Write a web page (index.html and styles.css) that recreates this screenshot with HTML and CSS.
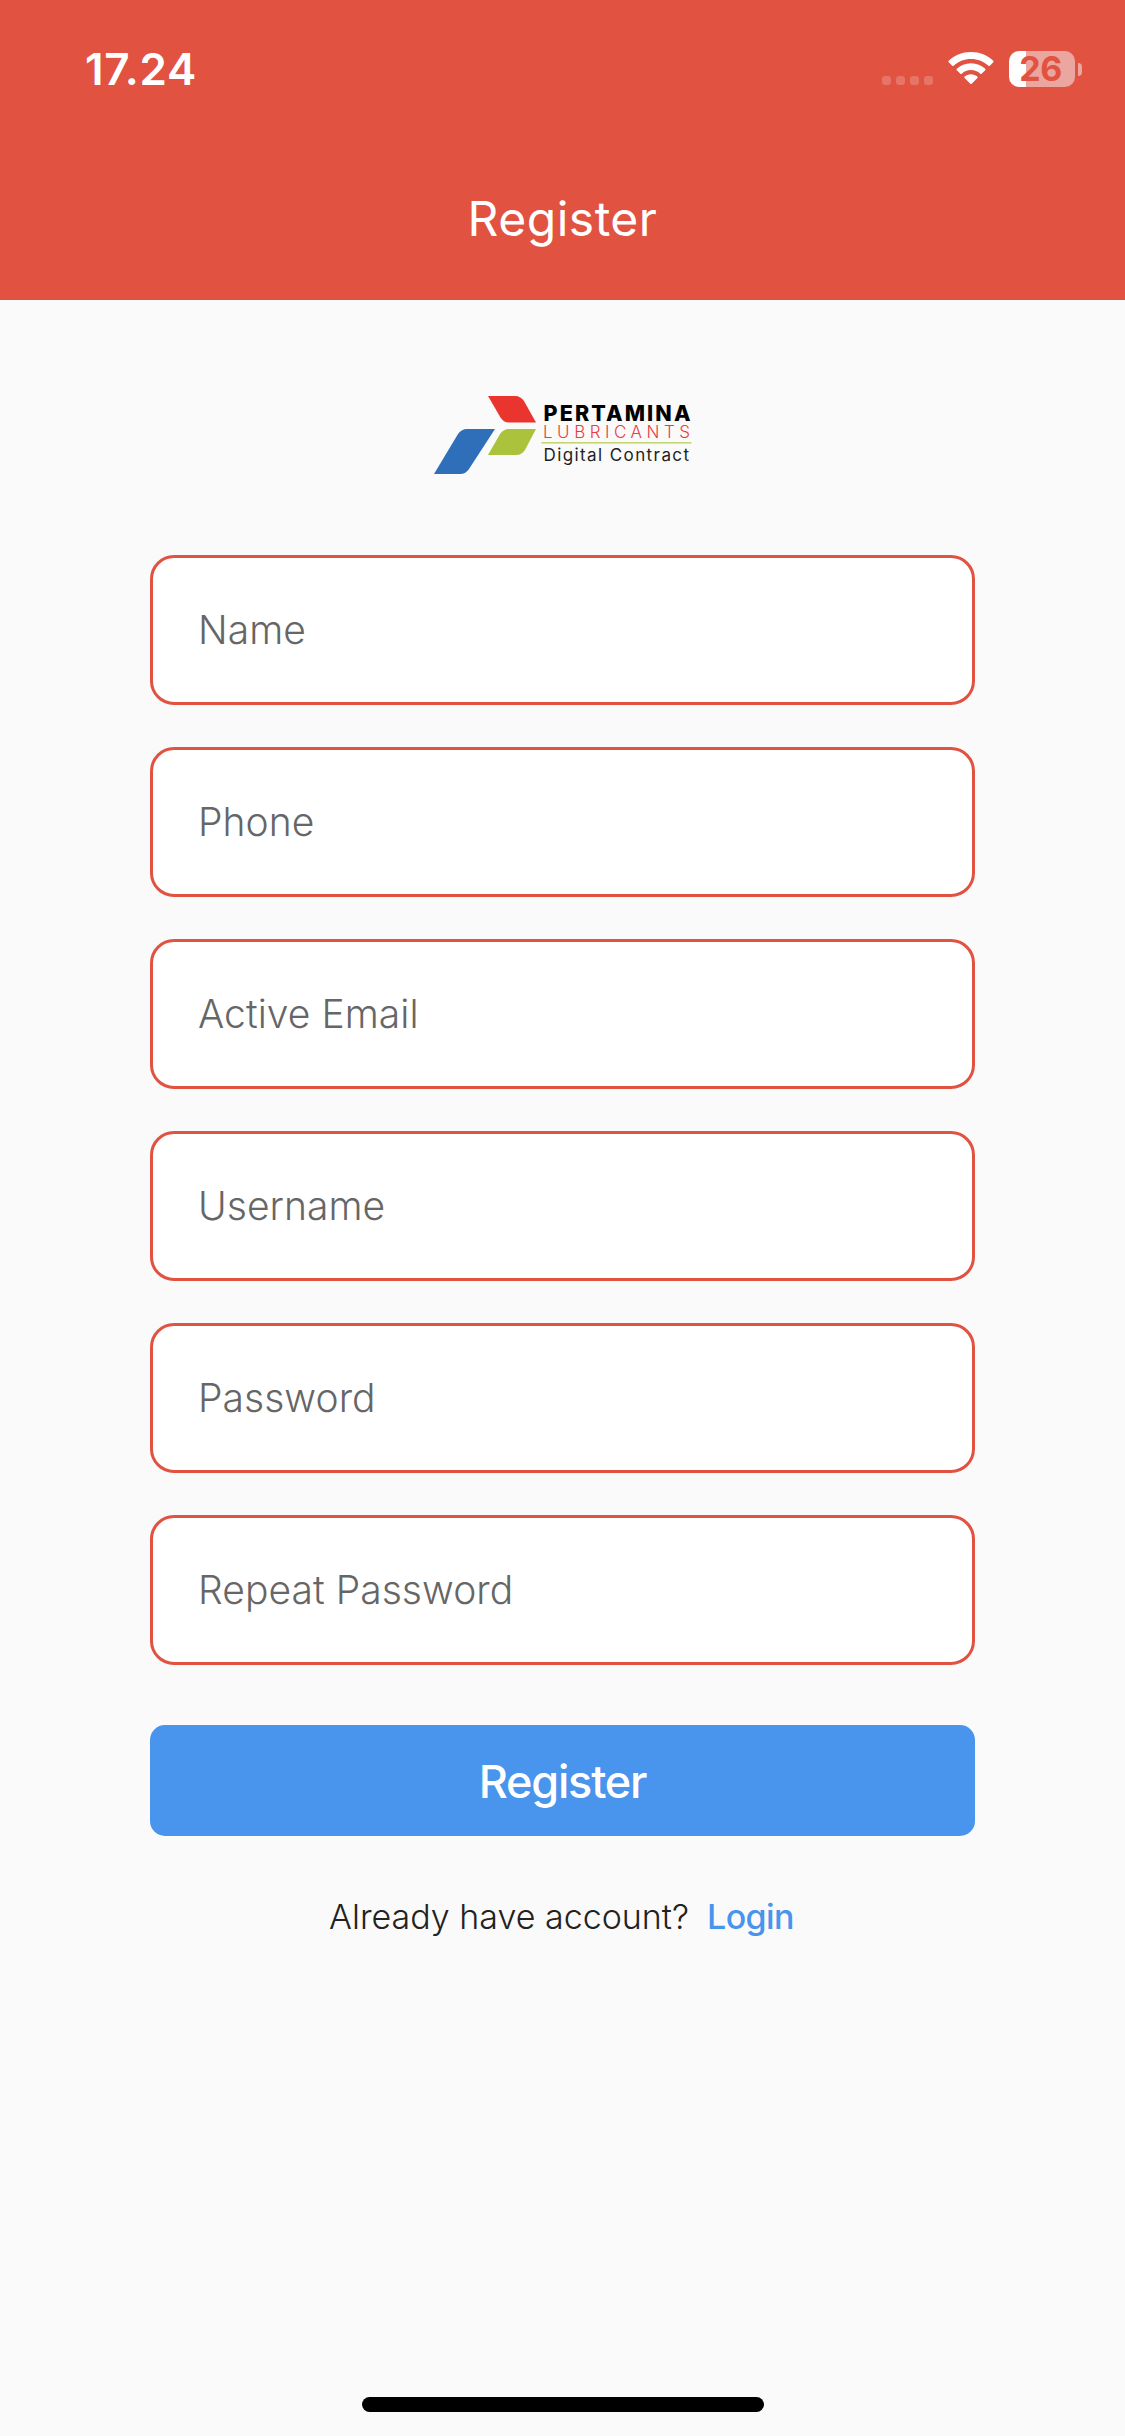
FILE: index.html
```html
<!DOCTYPE html>
<html lang="en">
<head>
    <meta charset="UTF-8">
    <meta name="viewport" content="width=device-width, initial-scale=1.0">
    <title>Register</title>
    <link rel="stylesheet" href="styles.css">
</head>
<body>
    <header class="header">
        <div class="status-bar">
            <span class="time">17.24</span>
            <div class="status-icons">
                <div class="signal"><i></i><i></i><i></i><i></i></div>
                <svg class="wifi" width="46" height="34" viewBox="0 0 46 34" fill="#fff">
                    <path d="M23 1C14.5 1 6.600 4.300.7 9.800c-.4.4-.4 1 0 1.400l3.500 3.500c.4.4 1 .4 1.400 0C10.200 10.400 16.300 7.900 23 7.900s12.800 2.500 17.400 6.800c.4.4 1 .4 1.400 0l3.500-3.500c.4-.4.4-1 0-1.400C39.400 4.300 31.500 1 23 1z"/>
                    <path d="M23 12.200c-5.500 0-10.500 2.100-14.200 5.600-.4.4-.4 1 0 1.400l3.600 3.500c.4.400 1 .4 1.400 0 2.400-2.200 5.600-3.600 9.200-3.600s6.800 1.400 9.200 3.600c.4.400 1 .4 1.400 0l3.600-3.500c.4-.4.4-1 0-1.400-3.700-3.500-8.700-5.600-14.200-5.600z"/>
                    <path d="M23 23.200c-2.500 0-4.700.9-6.400 2.400-.4.4-.4 1 0 1.400l5.700 5.700c.4.4 1 .4 1.400 0l5.700-5.700c.4-.4.4-1 0-1.400-1.700-1.500-3.900-2.400-6.400-2.400z"/>
                </svg>
                <div class="battery">
                    <div class="battery-body">26</div>
                    <div class="battery-cap"></div>
                </div>
            </div>
        </div>
        <h1 class="title">Register</h1>
    </header>

    <main class="content">
        <svg class="logo" width="260" height="82" viewBox="432 394 260 82">
            <path fill="#ea352f" d="M488 396h27c4 0 7 2 9 5l12 21.500h-27c-4 0-6.500-2-8.500-5z"/>
            <path fill="#abc33c" d="M536 429h-27c-4 0-7 2-9 5l-12 21h28c4 0 7-2 9-5z"/>
            <path fill="#2f6eb8" d="M495 429h-28c-4 0-7 2-9 5l-24 40h26c4 0 7-2 9-5z"/>
            <text class="logo-name" x="543.500" y="421.300" textLength="147">PERTAMINA</text>
            <text class="logo-unit" x="543" y="438.200" textLength="147">LUBRICANTS</text>
            <rect fill="#c4d66e" x="541.500" y="442" width="150" height="1.600"/>
            <text class="logo-app" x="543.500" y="460.700" textLength="145.500">Digital Contract</text>
        </svg>

        <form class="form">
            <input class="field" type="text" placeholder="Name">
            <input class="field" type="tel" placeholder="Phone">
            <input class="field" type="email" placeholder="Active Email">
            <input class="field" type="text" placeholder="Username">
            <input class="field" type="password" placeholder="Password">
            <input class="field" type="password" placeholder="Repeat Password">
            <button class="submit" type="button">Register</button>
        </form>

        <p class="account"><span>Already have account?</span><a class="login">Login</a></p>
    </main>

    <div class="home-indicator"></div>
</body>
</html>
```
FILE: styles.css
```css
* {
    box-sizing: border-box;
}
body {
    margin: 0;
    height: 2436px;
    display: flex;
    flex-direction: column;
    align-items: center;
    background-color: #fafafa;
    font-family: Inter, sans-serif;
    overflow: hidden;
}
.header {
    width: 100%;
    height: 300px;
    background-color: #e15241;
    color: white;
}
.status-bar {
    height: 132px;
    padding: 0 43px 0 85px;
    display: flex;
    justify-content: space-between;
}
.time {
    margin-top: 42px;
    font-size: 44px;
    line-height: 54px;
    font-weight: 600;
    letter-spacing: 0.7px;
}
.status-icons {
    display: flex;
    align-items: flex-start;
}
.signal {
    display: flex;
    gap: 5px;
    margin: 76px 15px 0 0;
}
.signal i {
    width: 9px;
    height: 9px;
    border-radius: 3px;
    background-color: rgba(255, 255, 255, 0.2);
}
.wifi {
    margin: 51px 15px 0 0;
}
.battery {
    display: flex;
    align-items: center;
    gap: 3px;
    margin-top: 51px;
}
.battery-body {
    width: 66px;
    height: 36px;
    border-radius: 10px;
    background: linear-gradient(to right, #fff 17px, #eba69f 17px);
    color: #e15241;
    font-size: 34px;
    line-height: 36px;
    font-weight: 700;
    text-align: center;
    letter-spacing: -0.5px;
    padding-right: 3px;
}
.battery-cap {
    width: 4px;
    height: 13px;
    border-radius: 0 4px 4px 0;
    background-color: #eba69f;
}
.title {
    margin: 58px 0 0;
    font-size: 48px;
    line-height: 58px;
    font-weight: 400;
    letter-spacing: 0.5px;
    text-align: center;
}
.content {
    width: 825px;
    flex: 1;
    padding-top: 94px;
}
.logo {
    display: block;
    margin: 0 auto 79px 282px;
}
.logo-name {
    font-size: 21.5px;
    font-weight: 800;
}
.logo-unit {
    font-size: 17px;
    font-weight: 300;
    fill: #ee3a3f;
}
.logo-app {
    font-size: 17px;
    font-weight: 400;
    fill: #222;
}
.form {
    display: flex;
    flex-direction: column;
    gap: 42px;
}
.field {
    width: 100%;
    height: 150px;
    padding: 0 45px 1px;
    border: 3px solid #e15241;
    border-radius: 24px;
    background-color: white;
    font-family: inherit;
    font-size: 39px;
    font-weight: 300;
    letter-spacing: 0.05px;
}
.field::placeholder {
    color: #666;
    opacity: 1;
}
.submit {
    height: 111px;
    margin-top: 18px;
    padding: 1px 0 0;
    border: none;
    border-radius: 15px;
    background-color: #4994ec;
    color: white;
    font-family: inherit;
    font-size: 45px;
    font-weight: 500;
    letter-spacing: -1.2px;
}
.account {
    margin: 60px 0 0;
    padding-right: 2px;
    display: flex;
    justify-content: center;
    gap: 18px;
    font-size: 34px;
    line-height: 42px;
    font-weight: 300;
    color: #222;
}
.login {
    color: #4994ec;
    font-weight: 500;
    letter-spacing: -0.6px;
}
.home-indicator {
    width: 402px;
    height: 15px;
    margin-bottom: 24px;
    border-radius: 8px;
    background-color: black;
}
```
